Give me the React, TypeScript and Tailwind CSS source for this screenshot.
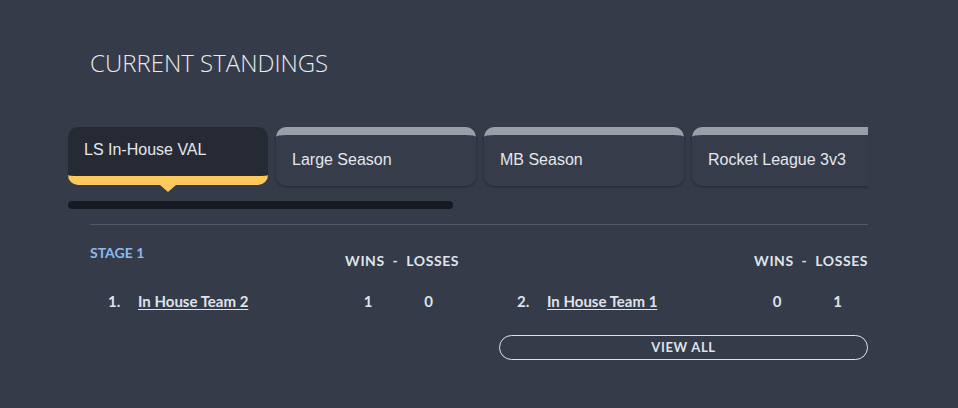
import React from "react";

type Row = { rank: number; team: string; wins: number; losses: number };

const tabs = ["LS In-House VAL", "Large Season", "MB Season", "Rocket League 3v3"];

const columns: Row[][] = [
  [{ rank: 1, team: "In House Team 2", wins: 1, losses: 0 }],
  [{ rank: 2, team: "In House Team 1", wins: 0, losses: 1 }],
];

const Tab: React.FC<{ label: string; active?: boolean }> = ({ label, active }) => {
  if (active) {
    return (
      <div className="relative shrink-0 w-[200px] h-[58px] rounded-[10px] bg-[#262a34] border-b-[9px] border-[#fec95c] pl-4 pt-[11px] text-[16px] text-[#e4e7ec]">
        {label}
        <div className="absolute left-[92px] -bottom-[16px] w-0 h-0 border-l-[8px] border-r-[8px] border-t-[7px] border-l-transparent border-r-transparent border-t-[#fec95c]" />
      </div>
    );
  }
  return (
    <div className="shrink-0 w-[200px] h-[59px] rounded-[10px] bg-[#363c49] border-t-[8px] border-[#9a9ea6] shadow-[0_1px_3px_rgba(0,0,0,0.35)] pl-4 pt-[13px] text-[16px] text-[#e4e7ec]">
      {label}
    </div>
  );
};

const StandingsColumn: React.FC<{ rows: Row[]; stage?: string }> = ({ rows, stage }) => (
  <div className="flex flex-col">
    <div className="flex justify-between h-[44px]">
      <span className="text-[14px] leading-[20px] font-bold text-[#8db9ee]">{stage}</span>
      <span className="text-[14px] leading-[20px] font-bold text-[#dfe3ea] pt-[8px] tracking-[0.04em]">
        WINS&nbsp; - &nbsp;LOSSES
      </span>
    </div>
    {rows.map((r) => (
      <div key={r.rank} className="flex items-center h-[28px] text-[15px] font-bold text-[#dfe3ea]">
        <span className="w-[48px] pl-[18px]">{r.rank}.</span>
        <a href="#" className="flex-1 underline underline-offset-2">
          {r.team}
        </a>
        <span className="w-[60px] text-center">{r.wins}</span>
        <span className="w-[61px] text-center">{r.losses}</span>
      </div>
    ))}
  </div>
);

export default function App() {
  return (
    <div className="min-h-screen w-full bg-[#353b48] pl-[90px] pt-[48px] font-['Lato',sans-serif]">
      <div className="w-[778px]">
        <h2 className="font-['Open_Sans',sans-serif] font-light text-[24px] leading-[30px] text-[#e8eaee]">
          CURRENT STANDINGS
        </h2>

        <div className="-ml-[22px] w-[800px] mt-[49px]">
          <div className="flex gap-2 overflow-hidden font-['Liberation_Sans',Arial,sans-serif] pb-[8px]">
            {tabs.map((t, i) => (
              <Tab key={t} label={t} active={i === 0} />
            ))}
          </div>
          <div className="mt-[7px] h-[8px] w-[385px] rounded-full bg-[#171a20]" />
        </div>

        <div className="mt-[15px] h-[1px] bg-[#525a67]" />

        <div className="grid grid-cols-2 gap-x-10 pt-[18px]">
          {columns.map((rows, i) => (
            <StandingsColumn key={i} rows={rows} stage={i === 0 ? "STAGE 1" : undefined} />
          ))}
          <div />
          <button className="h-[25px] rounded-full border border-[#dfe3ea] text-[13px] font-bold tracking-[0.05em] text-[#dfe3ea] mt-[20px]">
            VIEW ALL
          </button>
        </div>
      </div>
    </div>
  );
}
